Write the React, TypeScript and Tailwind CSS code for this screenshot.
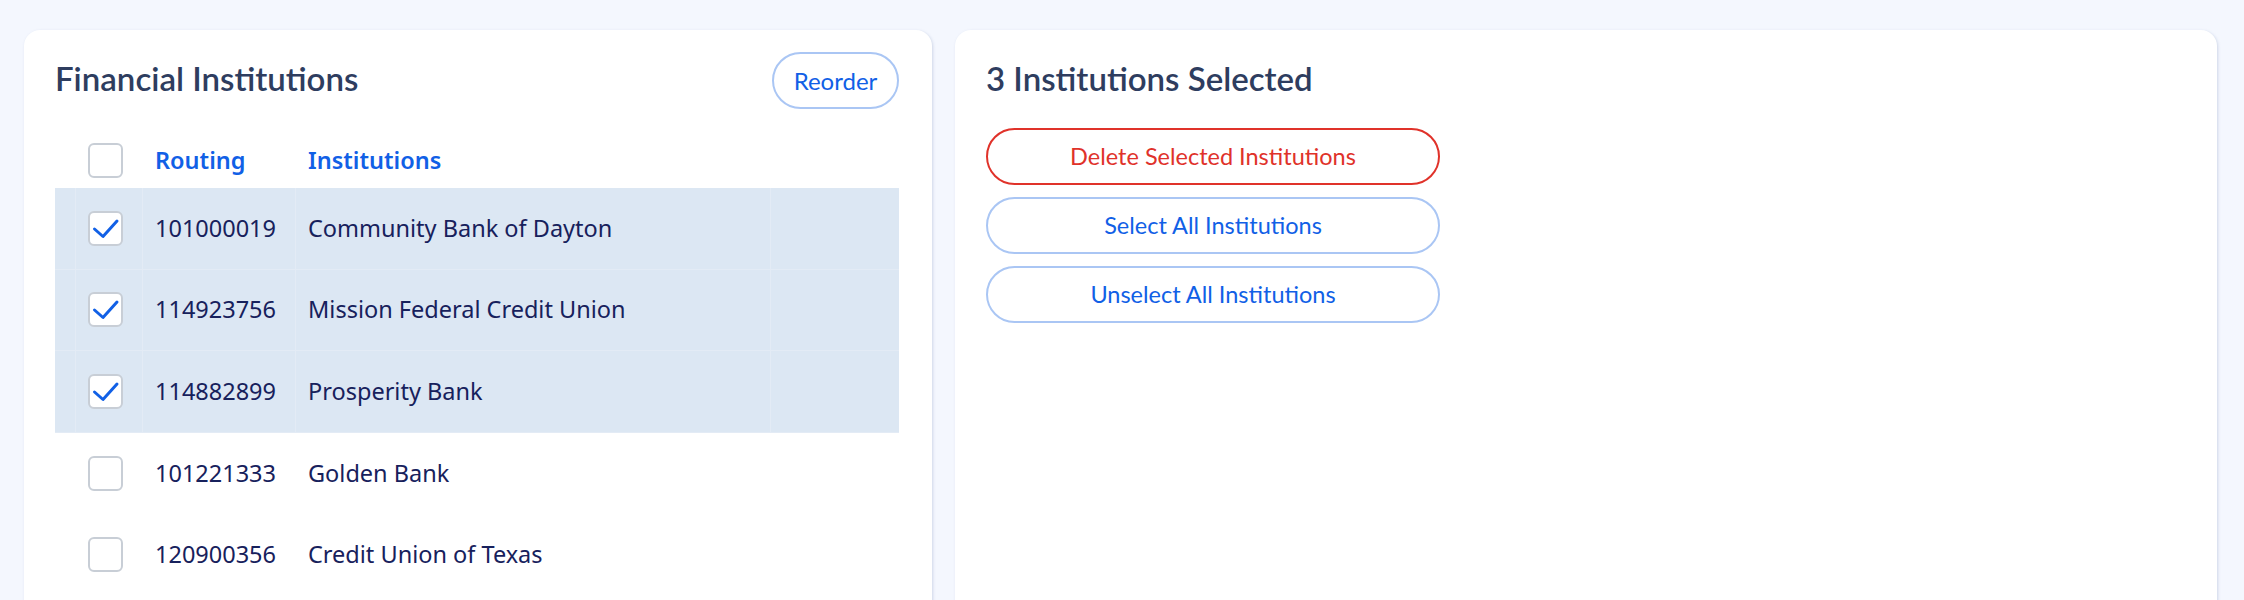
import { useState } from 'react';

interface Institution {
  routing: string;
  name: string;
}

const institutions: Institution[] = [
  { routing: '101000019', name: 'Community Bank of Dayton' },
  { routing: '114923756', name: 'Mission Federal Credit Union' },
  { routing: '114882899', name: 'Prosperity Bank' },
  { routing: '101221333', name: 'Golden Bank' },
  { routing: '120900356', name: 'Credit Union of Texas' },
];

function CheckBox({ checked }: { checked: boolean }) {
  return (
    <div className="w-[35px] h-[35px] rounded-[6px] border-2 border-[#c8ced6] bg-white flex items-center justify-center">
      {checked && (
        <svg width="35" height="35" viewBox="0 0 35 35" className="-m-[2px]">
          <path d="M6.5 18 L15 25.5 L29 10" fill="none" stroke="#1160e6" strokeWidth="3" strokeLinecap="round" strokeLinejoin="round" />
        </svg>
      )}
    </div>
  );
}

export default function App() {
  const [selected] = useState<string[]>(['101000019', '114923756', '114882899']);

  return (
    <div className="h-[600px] overflow-hidden bg-[#f4f7fe] pt-[30px] pl-6 pr-[27px] flex gap-[23px] items-start">
      {/* left card */}
      <div className="w-[908px] shrink-0 h-[640px] bg-white rounded-2xl shadow-[1px_1px_3px_rgba(120,140,180,0.3)] pl-[31px] pr-[33px] pt-[22px]">
        <div className="flex items-center justify-between h-[57px]">
          <h2 className="font-['Lato',sans-serif] font-semibold text-[33px] text-[#2e3d5f] -mt-[4px]">Financial Institutions</h2>
          <button className="w-[127px] h-[57px] rounded-full border-2 border-[#aac6f4] text-[#1160e6] font-['Lato',sans-serif] text-[24px]">
            Reorder
          </button>
        </div>

        <div className="mt-6 font-['Noto_Sans',sans-serif] text-[23.5px]">
          <div className="grid grid-cols-[21px_67px_153px_475px_1fr] h-[55px] items-center">
            <div />
            <div className="px-3"><CheckBox checked={false} /></div>
            <div className="px-3 font-semibold text-[#1160e6]">Routing</div>
            <div className="px-3 font-semibold text-[#1160e6]">Institutions</div>
            <div />
          </div>
          {institutions.map((inst) => {
            const on = selected.includes(inst.routing);
            return (
              <div
                key={inst.routing}
                className={`grid grid-cols-[21px_67px_153px_475px_1fr] h-[81.67px] text-[#17215c] ${on ? 'bg-[#dce7f3]' : 'bg-white'}`}
              >
                <div className="border-r border-b border-white/20" />
                <div className="px-3 flex items-center border-r border-b border-white/20"><CheckBox checked={on} /></div>
                <div className="px-3 flex items-center border-r border-b border-white/20">{inst.routing}</div>
                <div className="px-3 flex items-center border-r border-b border-white/20">{inst.name}</div>
                <div className="border-b border-white/20" />
              </div>
            );
          })}
        </div>
      </div>

      {/* right card */}
      <div className="flex-1 h-[640px] bg-white rounded-2xl shadow-[1px_1px_3px_rgba(120,140,180,0.3)] px-[31px] pt-[22px] font-['Lato',sans-serif]">
        <div className="flex items-center h-[57px]">
          <h2 className="font-semibold text-[33px] text-[#2e3d5f] -mt-[4px]">3 Institutions Selected</h2>
        </div>
        <div className="mt-[19px] flex flex-col gap-3 w-[454px]">
          <button className="h-[57px] rounded-full border-2 border-[#e0322a] text-[#e0322a] text-[23.5px]">
            Delete Selected Institutions
          </button>
          <button className="h-[57px] rounded-full border-2 border-[#aac6f4] text-[#1160e6] text-[23.5px]">
            Select All Institutions
          </button>
          <button className="h-[57px] rounded-full border-2 border-[#aac6f4] text-[#1160e6] text-[23.5px]">
            Unselect All Institutions
          </button>
        </div>
      </div>
    </div>
  );
}
